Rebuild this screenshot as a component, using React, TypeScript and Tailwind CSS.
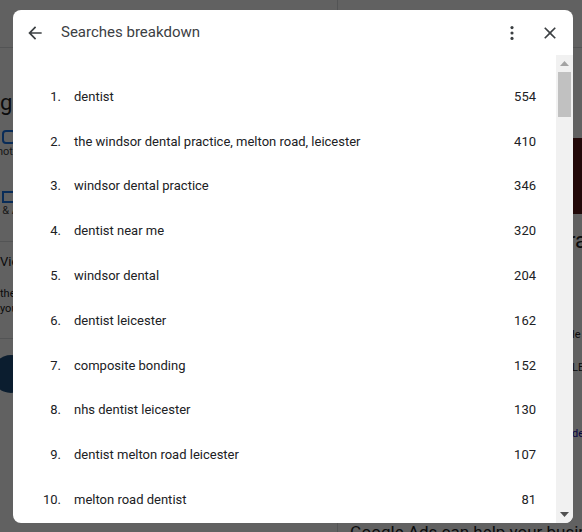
import React from "react";

const ROWS = [
  { term: "dentist", count: 554 },
  { term: "the windsor dental practice, melton road, leicester", count: 410 },
  { term: "windsor dental practice", count: 346 },
  { term: "dentist near me", count: 320 },
  { term: "windsor dental", count: 204 },
  { term: "dentist leicester", count: 162 },
  { term: "composite bonding", count: 152 },
  { term: "nhs dentist leicester", count: 130 },
  { term: "dentist melton road leicester", count: 107 },
  { term: "melton road dentist", count: 81 },
];

function BackgroundPage() {
  // the search page sitting underneath the dimmed overlay
  return (
    <div className="flex h-full w-full bg-white text-[#202124]">
      <div className="flex w-[338px] shrink-0 flex-col border-r border-[#dadce0]">
        <div className="h-[48px] border-b border-[#dadce0]" />
        <div className="-ml-[40px] pt-[40px] text-[22px] leading-[30px]">Google</div>
        <div className="mt-[12px] flex flex-col gap-[30px] pl-[2px] text-[11px] text-[#444]">
          <div className="flex flex-col">
            <div className="h-[14px] w-[14px] rounded-sm border-2 border-[#1a73e8]" />
            <span className="-ml-[12px]">Photos</span>
          </div>
          <div className="flex flex-col">
            <div className="h-[12px] w-[14px] border-2 border-[#1a73e8]" />
            <span className="-ml-[10px]">Q & A</span>
          </div>
        </div>
        <div className="mt-[22px] border-t border-[#dadce0] pt-[10px] text-[13px]">View reviews</div>
        <div className="mt-[14px] text-[11px] leading-[15px]">
          the
          <br />
          you
        </div>
        <div className="mt-[22px] border-t border-[#dadce0] pt-[16px]">
          <div className="-ml-[8px] h-[38px] w-[38px] rounded-full bg-[#1e4e7c]" />
        </div>
      </div>
      <div className="flex min-w-0 flex-1 flex-col">
        <div className="h-[48px] border-b border-[#dadce0]" />
        <div className="h-[90px]" />
        <div className="ml-auto h-[76px] w-[9px] bg-[#5a1a1a]" />
        <div className="ml-auto w-[14px] overflow-hidden pt-[10px] text-[22px]">ra</div>
        <div className="h-[70px]" />
        <div className="ml-auto w-[10px] overflow-hidden text-[11px]">le</div>
        <div className="ml-auto mt-[16px] w-[10px] overflow-hidden text-[11px]">LE</div>
        <div className="ml-auto mt-[50px] w-[10px] overflow-hidden text-[11px] text-[#1a0dab]">de</div>
        <div className="mt-auto -mb-[10px] whitespace-nowrap pl-[12px] text-[17px] leading-[20px]">Google Ads can help your business</div>
      </div>
    </div>
  );
}

function Scrollbar() {
  return (
    <div className="flex w-[17px] shrink-0 flex-col bg-[#f1f1f1]">
      <div className="flex h-[17px] items-center justify-center">
        <svg width="9" height="5" viewBox="0 0 9 5">
          <path d="M0 5 L4.5 0 L9 5 Z" fill="#a3a3a3" />
        </svg>
      </div>
      <div className="mx-[2px] h-[45px] bg-[#c1c1c1]" />
      <div className="flex-1" />
      <div className="flex h-[17px] items-center justify-center">
        <svg width="9" height="5" viewBox="0 0 9 5">
          <path d="M0 0 L4.5 5 L9 0 Z" fill="#505050" />
        </svg>
      </div>
    </div>
  );
}

export default function App() {
  return (
    <div className="relative h-[532px] w-[582px] overflow-hidden font-['Roboto','Liberation_Sans',sans-serif]">
      <BackgroundPage />
      {/* dim overlay */}
      <div className="absolute inset-0 bg-black/[0.62]" />

      {/* dialog */}
      <div className="absolute left-[13px] top-[10px] flex h-[513px] w-[560px] flex-col overflow-hidden rounded-[8px] bg-white">
        <div className="flex h-[45px] shrink-0 items-center pl-[12px] pr-[13px]">
          <svg width="20" height="20" viewBox="0 0 24 24" fill="#3c4043">
            <path d="M20 11H7.83l5.59-5.59L12 4l-8 8 8 8 1.41-1.41L7.83 13H20v-2z" />
          </svg>
          <div className="ml-[16px] flex-1 text-[15px] text-[#3c4043]">Searches breakdown</div>
          <svg width="20" height="20" viewBox="0 0 24 24" fill="#3c4043">
            <circle cx="12" cy="5.5" r="1.9" />
            <circle cx="12" cy="12" r="1.9" />
            <circle cx="12" cy="18.5" r="1.9" />
          </svg>
          <svg className="ml-[18px]" width="20" height="20" viewBox="0 0 24 24" fill="#3c4043">
            <path d="M19 6.41L17.59 5 12 10.59 6.41 5 5 6.41 10.59 12 5 17.59 6.41 19 12 13.41 17.59 19 19 17.59 13.41 12z" />
          </svg>
        </div>

        <div className="flex min-h-0 flex-1">
          <div className="flex-1 pt-[19.2px]">
            {ROWS.map((row, i) => (
              <div key={i} className="flex h-[44.8px] items-center pr-[20px] text-[13px] text-[#202124]">
                <span className="w-[48px] shrink-0 text-right">{i + 1}.</span>
                <span className="ml-[13px] flex-1">{row.term}</span>
                <span>{row.count}</span>
              </div>
            ))}
          </div>
          <Scrollbar />
        </div>
      </div>
    </div>
  );
}
